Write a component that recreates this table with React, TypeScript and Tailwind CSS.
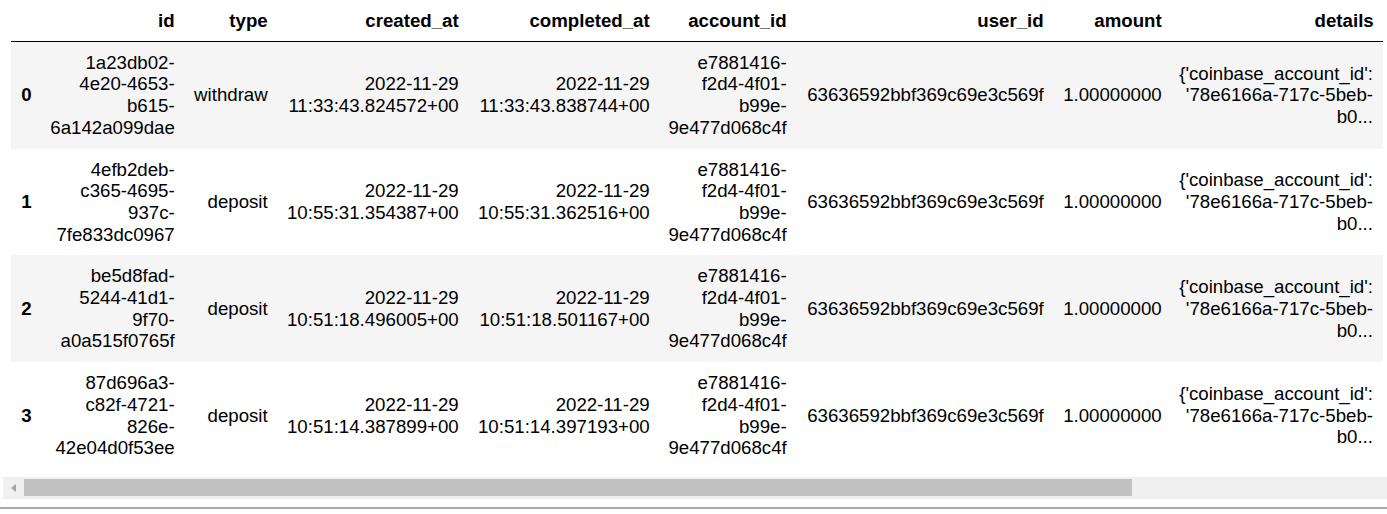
const rows = [
  {
    idx: "0",
    id: "1a23db02-4e20-4653-b615-6a142a099dae",
    type: "withdraw",
    created: "2022-11-29 11:33:43.824572+00",
    completed: "2022-11-29 11:33:43.838744+00",
  },
  {
    idx: "1",
    id: "4efb2deb-c365-4695-937c-7fe833dc0967",
    type: "deposit",
    created: "2022-11-29 10:55:31.354387+00",
    completed: "2022-11-29 10:55:31.362516+00",
  },
  {
    idx: "2",
    id: "be5d8fad-5244-41d1-9f70-a0a515f0765f",
    type: "deposit",
    created: "2022-11-29 10:51:18.496005+00",
    completed: "2022-11-29 10:51:18.501167+00",
  },
  {
    idx: "3",
    id: "87d696a3-c82f-4721-826e-42e04d0f53ee",
    type: "deposit",
    created: "2022-11-29 10:51:14.387899+00",
    completed: "2022-11-29 10:51:14.397193+00",
  },
]

const headers = ["id", "type", "created_at", "completed_at", "account_id", "user_id", "amount", "details"]

export default function App() {
  return (
    <div
      className="bg-white text-black text-[18.67px] leading-[21.7px] w-[1387px] h-[514px] overflow-hidden"
      style={{ fontFamily: '"Liberation Sans", Arial, sans-serif' }}
    >
      <table className="ml-[11px] table-fixed border-collapse w-[1372px]">
        <colgroup>
          <col className="w-[30px]" />
          <col className="w-[143px]" />
          <col className="w-[93px]" />
          <col className="w-[191px]" />
          <col className="w-[191px]" />
          <col className="w-[137px]" />
          <col className="w-[257px]" />
          <col className="w-[118px]" />
          <col className="w-[212px]" />
        </colgroup>
        <thead className="border-b border-black">
          <tr>
            <th className="px-[9.3px] py-[9.5px]"></th>
            {headers.map((h) => (
              <th key={h} className="px-[9.3px] py-[9.5px] text-right align-bottom font-bold">
                {h}
              </th>
            ))}
          </tr>
        </thead>
        <tbody>
          {rows.map((r, i) => (
            <tr key={r.idx} className={i % 2 === 0 ? "bg-[#f5f5f5]" : "bg-white"}>
              <th className="px-[9.3px] py-[10px] text-right align-middle font-bold">{r.idx}</th>
              <td className="px-[9.3px] py-[10px] text-right align-middle">{r.id}</td>
              <td className="px-[9.3px] py-[10px] text-right align-middle">{r.type}</td>
              <td className="px-[9.3px] py-[10px] text-right align-middle">{r.created}</td>
              <td className="px-[9.3px] py-[10px] text-right align-middle">{r.completed}</td>
              <td className="px-[9.3px] py-[10px] text-right align-middle">e7881416-f2d4-4f01-b99e-9e477d068c4f</td>
              <td className="px-[9.3px] py-[10px] text-right align-middle">63636592bbf369c69e3c569f</td>
              <td className="px-[9.3px] py-[10px] text-right align-middle">1.00000000</td>
              <td className="pl-[8px] pr-[10px] py-[10px] text-right align-middle">
                {"{'coinbase_account_id':"}
                <br />
                {"'78e6166a-717c-5beb-"}
                <br />
                b0...
              </td>
            </tr>
          ))}
        </tbody>
      </table>

      {/* horizontal scrollbar */}
      <div className="mt-[8px] ml-[3px] h-[22px] bg-[#f0f0f0] flex items-center">
        <div className="w-[21px] h-full flex items-center justify-center">
          <div className="w-0 h-0 border-y-[4px] border-y-transparent border-r-[5px] border-r-[#a3a3a3]" />
        </div>
        <div className="w-[1108px] h-[17px] bg-[#c1c1c1]" />
      </div>

      <div className="mt-[8px] h-[2px] bg-[#a8a8a8]" />
    </div>
  )
}
